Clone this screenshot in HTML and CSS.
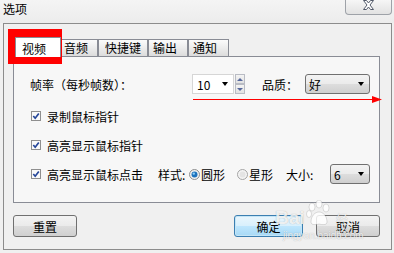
FILE: index.html
```html
<!DOCTYPE html>
<html lang="zh-CN">
<head>
  <meta charset="UTF-8">
  <title>选项</title>
  <link rel="stylesheet" href="styles.css">
</head>
<body>

  <div class="titlebar">
    <span class="title">选项</span>
    <span class="close">
      <svg width="13" height="10" viewBox="0 0 13 10"><path d="M1.5 0.5H4.5L6.5 3L8.5 0.5H11.5L8 5L11.5 9.5H8.5L6.5 7L4.5 9.5H1.5L5 5Z" fill="#fff" stroke="#535a6a"/></svg>
    </span>
  </div>

  <div class="window">
    <div class="tabs">
      <div class="tab active">视频</div>
      <div class="tab tab-audio">音频</div>
      <div class="tab tab-keys">快捷键</div>
      <div class="tab tab-out">输出</div>
      <div class="tab tab-notify">通知</div>
    </div>

    <div class="panel">
      <div class="fps-row">
        <span class="fps-label">帧率（每秒帧数）：</span>
        <span class="combo combo-edit">10<i class="arrow"></i></span>
        <span class="spin">
          <span class="spin-btn"><i class="up"></i></span>
          <span class="spin-btn"><i class="down"></i></span>
        </span>
        <span class="quality-label">品质：</span>
        <span class="combo combo-drop quality">好<i class="arrow"></i></span>
      </div>

      <div class="check-row first">
        <svg class="checkbox" width="10" height="10" viewBox="0 0 10 10"><rect x="0.5" y="0.5" width="9" height="9" fill="#fafafa" stroke="#8f8f8f"/><path d="M2.3 5L4.2 7.2L7.8 2.4" fill="none" stroke="#26479a" stroke-width="1.7"/></svg>
        <span>录制鼠标指针</span>
      </div>

      <div class="check-row">
        <svg class="checkbox" width="10" height="10" viewBox="0 0 10 10"><rect x="0.5" y="0.5" width="9" height="9" fill="#fafafa" stroke="#8f8f8f"/><path d="M2.3 5L4.2 7.2L7.8 2.4" fill="none" stroke="#26479a" stroke-width="1.7"/></svg>
        <span>高亮显示鼠标指针</span>
      </div>

      <div class="check-row">
        <svg class="checkbox" width="10" height="10" viewBox="0 0 10 10"><rect x="0.5" y="0.5" width="9" height="9" fill="#fafafa" stroke="#8f8f8f"/><path d="M2.3 5L4.2 7.2L7.8 2.4" fill="none" stroke="#26479a" stroke-width="1.7"/></svg>
        <span>高亮显示鼠标点击</span>
        <span class="style-label">样式:</span>
        <svg class="radio" width="11" height="11" viewBox="0 0 11 11"><circle cx="5.5" cy="5.5" r="5" fill="#f0f0f0" stroke="#8e8f8f"/><circle cx="5.5" cy="5.5" r="3" fill="#1c72bd"/><circle cx="4.8" cy="4.6" r="1.2" fill="#8fd0f5"/></svg>
        <span class="radio-text">圆形</span>
        <svg class="radio radio-2" width="11" height="11" viewBox="0 0 11 11"><circle cx="5.5" cy="5.5" r="5" fill="#f4f4f4" stroke="#a4a4a4"/><circle cx="5.5" cy="5.5" r="3" fill="#e4e4e4"/></svg>
        <span class="radio-text">星形</span>
        <span class="size-label">大小:</span>
        <span class="combo combo-drop size">6<i class="arrow"></i></span>
      </div>
    </div>

    <div class="buttons">
      <span class="btn reset">重置</span>
      <span class="btn ok">确定</span>
      <span class="btn cancel">取消</span>
    </div>
  </div>

  <!-- annotations drawn over the screenshot -->
  <div class="red-box"></div>
  <svg class="red-arrow" width="194" height="12" viewBox="0 0 194 12"><path d="M3 5.5H183" stroke="#f00" stroke-width="1.2"/><path d="M182 2L192 5.5L182 9Z" fill="#f00"/></svg>

  <div class="watermark">
    <span class="wm-bai">Bai</span>
    <svg class="wm-paw" width="26" height="26" viewBox="0 0 26 26">
      <ellipse cx="7" cy="7" rx="3" ry="4" />
      <ellipse cx="14" cy="4" rx="3" ry="4" />
      <ellipse cx="21" cy="8" rx="3" ry="4" />
      <ellipse cx="4" cy="14" rx="2.5" ry="3.5" />
      <path d="M6 22C6 16 10 12 14 12C18 12 22 16 22 22C22 25 18 25 14 24C10 25 6 25 6 22Z" />
    </svg>
    <span class="wm-jy">经验</span>
    <span class="wm-url">jingyan.baidu.com</span>
  </div>

</body>
</html>
```

FILE: styles.css
```css
* {
  box-sizing: border-box;
}

body {
  margin: 0;
  width: 394px;
  height: 253px;
  overflow: hidden;
  position: relative;
  background: #f0f0f0;
  font-family: "Noto Sans CJK SC", "Noto Sans", sans-serif;
  font-size: 12px;
  color: #000;
}

/* title bar */
.titlebar {
  height: 23px;
  display: flex;
  justify-content: space-between;
  align-items: flex-start;
  background: linear-gradient(#f4f4f4, #ececec);
}

.title {
  padding-left: 3px;
  line-height: 17px;
}

.close {
  width: 47px;
  height: 15px;
  margin-right: 2px;
  border: 1px solid #9ea2a8;
  border-top: none;
  border-radius: 0 0 4px 4px;
  background: linear-gradient(#f6f6f6, #e2e2e2);
  display: flex;
  justify-content: center;
  align-items: flex-start;
}

/* dialog body */
.window {
  margin-left: 3px;
  width: 389px;
  height: 227px;
  border: 1px solid #8c8c8c;
  padding: 13px 11px 0 9px;
}

.tabs {
  display: flex;
  align-items: flex-end;
  height: 19px;
  padding-left: 2px;
}

.tab {
  height: 17px;
  border: 1px solid #898c95;
  border-bottom: none;
  padding-left: 4px;
  line-height: 15px;
  white-space: nowrap;
  background: linear-gradient(#fbfbfb, #ececec 50%, #dcdcdc);
}

.tab.active {
  width: 46px;
  height: 20px;
  margin-bottom: -1px;
  padding: 2px 0 0 6px;
  line-height: 17px;
  background: #fff;
  position: relative;
  z-index: 1;
}

.tab-audio { width: 37px; padding-left: 2px; }
.tab-keys { width: 50px; padding-left: 6px; }
.tab-out { width: 40px; }
.tab-notify { width: 41px; }

.panel {
  width: 367px;
  height: 147px;
  border: 1px solid #898c95;
  background: #f7f7f7;
  padding: 17px 0 0 16px;
}

.fps-row {
  display: flex;
  align-items: center;
  height: 20px;
}

.fps-label {
  width: 162px;
}

.combo {
  height: 20px;
  display: flex;
  align-items: center;
  justify-content: space-between;
}

.arrow {
  width: 0;
  height: 0;
  border-left: 3px solid transparent;
  border-right: 3px solid transparent;
  border-top: 4px solid #000;
}

.combo-edit {
  width: 42px;
  border: 1px solid #d6d6d6;
  background: #fff;
  padding: 0 5px 0 4px;
}

.combo-drop {
  border: 1px solid #707070;
  border-radius: 3px;
  background: linear-gradient(#f3f3f3, #ebebeb 48%, #dddddd 52%, #cfcfcf);
  padding: 0 5px 0 3px;
}

.quality { width: 65px; }
.size { width: 40px; }

.spin {
  width: 10px;
  height: 20px;
  margin-left: 1px;
  display: flex;
  flex-direction: column;
}

.spin-btn {
  flex: 1;
  border: 1px solid #b9bcc4;
  background: linear-gradient(#f4f4f4, #e2e2e2);
  display: flex;
  align-items: center;
  justify-content: center;
}

.up, .down {
  width: 0;
  height: 0;
  border-left: 3px solid transparent;
  border-right: 3px solid transparent;
}

.up { border-bottom: 3px solid #56689c; }
.down { border-top: 3px solid #56689c; }

.quality-label {
  width: 43px;
  margin-left: 17px;
}

.check-row {
  display: flex;
  align-items: center;
  height: 20px;
  margin-top: 9px;
}

.check-row.first {
  margin-top: 12px;
}

.checkbox {
  margin: 0 6px 0 1px;
  flex: none;
}

.style-label {
  width: 31px;
  margin-left: 15px;
}

.radio {
  flex: none;
  margin-right: 1px;
}

.radio-2 {
  margin-left: 12px;
}

.size-label {
  width: 44px;
  margin-left: 13px;
}

.buttons {
  display: flex;
  width: 367px;
  margin-top: 12px;
}

.btn {
  height: 22px;
  border: 1px solid #707070;
  border-radius: 3px;
  background: linear-gradient(#f3f3f3, #ebebeb 48%, #dddddd 52%, #cfcfcf);
  display: flex;
  align-items: center;
  justify-content: center;
}

.reset { width: 64px; }

.ok {
  width: 69px;
  margin-left: auto;
  border-color: #3c7fb1;
  background: linear-gradient(#eaf6fd, #d9f0fc 48%, #bee6fd 52%, #a7d9f5);
  box-shadow: inset 0 0 0 1px #c4e5f6;
}

.cancel {
  width: 64px;
  margin-left: 13px;
}

/* annotation overlays */
.red-box {
  position: absolute;
  left: 8px;
  top: 29px;
  width: 54px;
  height: 35px;
  border: 9px solid #f00;
  border-top-width: 8px;
}

.red-arrow {
  position: absolute;
  left: 190px;
  top: 94px;
}

/* baidu watermark */
.watermark {
  position: absolute;
  left: 0;
  top: 0;
  color: rgba(255, 255, 255, 0.82);
  text-shadow: 0 0 1px rgba(0, 0, 0, 0.3);
  font-family: "Liberation Sans", Arial, sans-serif;
}

.wm-bai {
  position: absolute;
  left: 275px;
  top: 207px;
  font-size: 19px;
  font-weight: bold;
  line-height: 22px;
}

.wm-paw {
  position: absolute;
  left: 305px;
  top: 200px;
  fill: rgba(255, 255, 255, 0.82);
  stroke: rgba(0, 0, 0, 0.12);
}

.wm-jy {
  position: absolute;
  left: 336px;
  top: 212px;
  font-family: "Noto Sans CJK SC", sans-serif;
  font-size: 12px;
  line-height: 14px;
}

.wm-url {
  position: absolute;
  left: 283px;
  top: 230px;
  font-size: 10px;
  line-height: 12px;
  white-space: nowrap;
}
```
